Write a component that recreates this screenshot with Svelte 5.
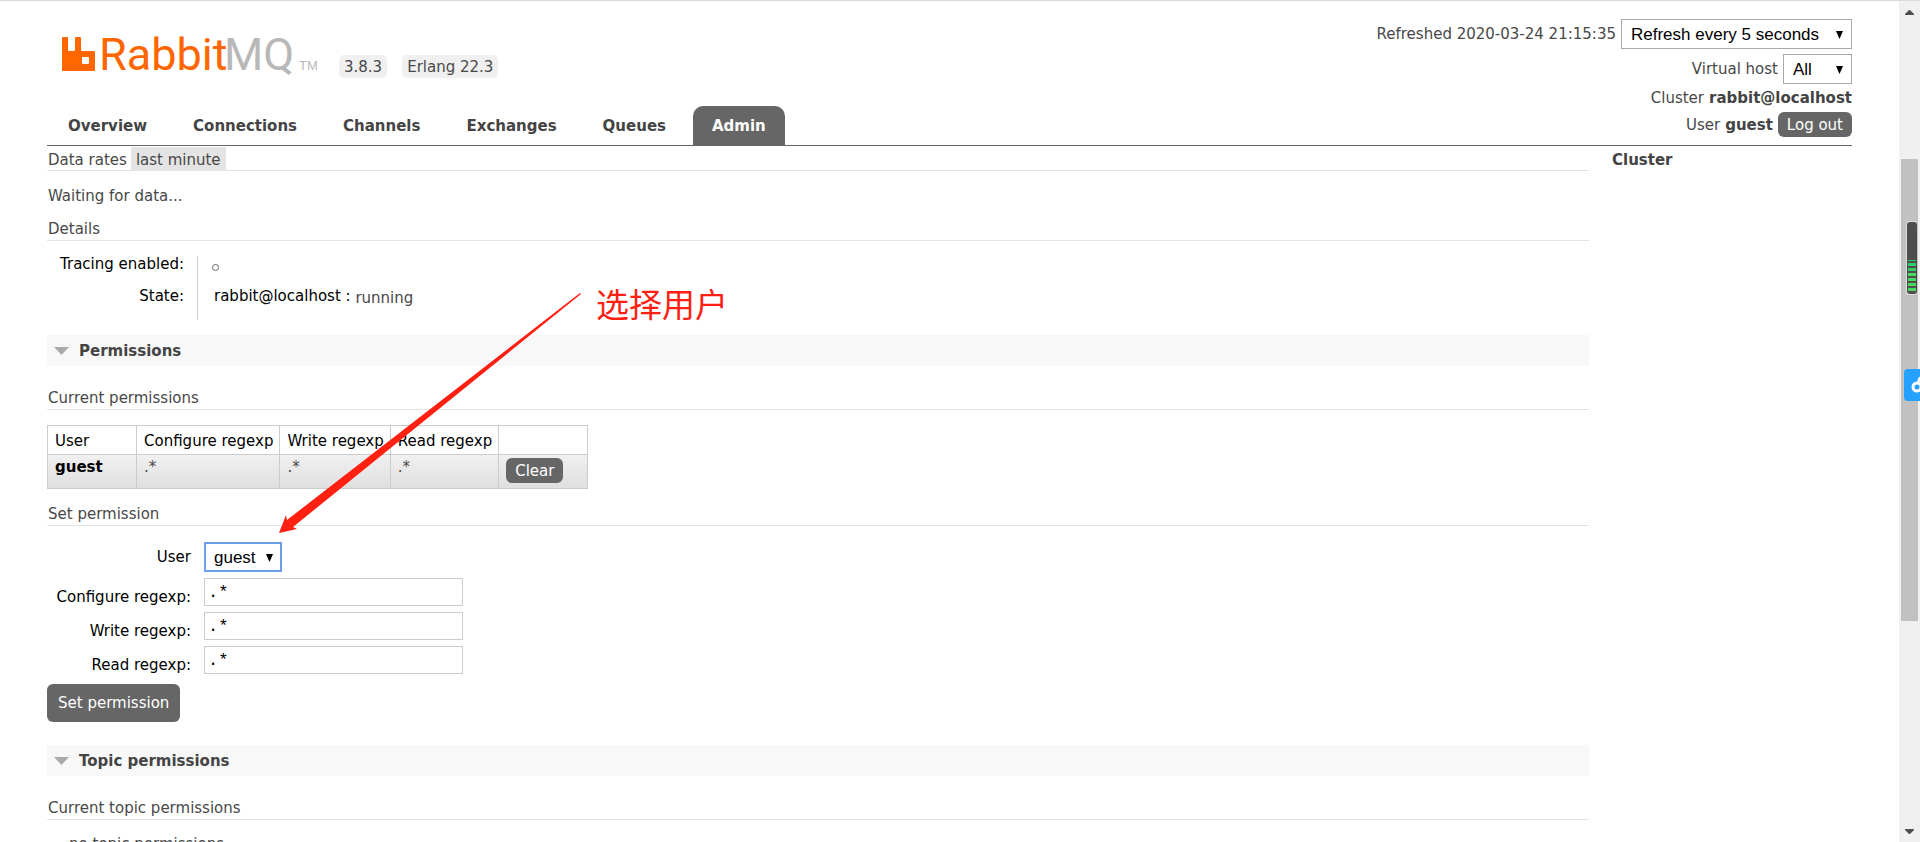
<script lang="ts">
	const tabs = ['Overview', 'Connections', 'Channels', 'Exchanges', 'Queues', 'Admin'];
	const columns = ['User', 'Configure regexp', 'Write regexp', 'Read regexp', ''];
	const permissions = [{ user: 'guest', configure: '.*', write: '.*', read: '.*' }];
	const ticks = [0, 3, 5, 8, 10, 13, 15, 18, 20, 23, 25, 28, 30];

	let activeTab = 'Admin';
	let fields = [
		{ id: 'configure', label: 'Configure regexp:', value: '.*' },
		{ id: 'write', label: 'Write regexp:', value: '.*' },
		{ id: 'read', label: 'Read regexp:', value: '.*' }
	];
</script>

<svelte:head>
	<title>RabbitMQ Management</title>
</svelte:head>

<div class="window">
	<div class="page">
		<header>
			<div class="brand-side">
				<div class="brand">
					<svg class="logo" width="262" height="52" viewBox="0 1 262 52" role="img" aria-label="RabbitMQ">
						<path
							fill="#f60"
							fill-rule="evenodd"
							d="M1 12h4q1 0 1 1v12q0 1 1 1h5q1 0 1-1V13q0-1 1-1h4q1 0 1 1v12q0 1 1 1h12q1 0 1 1v18q0 1-1 1H1q-1 0-1-1V13q0-1 1-1zM21 32q-1 0-1 1v5q0 1 1 1h5q1 0 1-1v-5q0-1-1-1z"
						/>
						<text class="rabbit" x="37" y="45">Rabbit</text>
						<text class="mq" x="162" y="45">MQ</text>
						<text class="tm" x="237" y="45">TM</text>
					</svg>
					<span class="version">3.8.3</span>
					<span class="version">Erlang 22.3</span>
				</div>
				<nav>
					{#each tabs as tab}
						<a href="#/{tab.toLowerCase()}" class:selected={activeTab === tab} on:click={() => (activeTab = tab)}>{tab}</a>
					{/each}
				</nav>
			</div>

			<div class="login">
				<div class="login-row">
					<label for="refresh">Refreshed 2020-03-24 21:15:35</label>
					<span class="select">
						<select id="refresh" class="refresh">
							<option>Refresh every 5 seconds</option>
							<option>Refresh every 30 seconds</option>
							<option>Do not refresh</option>
						</select>
						<svg width="7" height="8" viewBox="0 0 7 8"><path d="M0 0h7L3.5 8z" /></svg>
					</span>
				</div>
				<div class="login-row">
					<label for="vhost">Virtual host</label>
					<span class="select">
						<select id="vhost" class="vhost">
							<option>All</option>
							<option>/</option>
						</select>
						<svg width="7" height="8" viewBox="0 0 7 8"><path d="M0 0h7L3.5 8z" /></svg>
					</span>
				</div>
				<div class="login-row">Cluster <b>rabbit@localhost</b></div>
				<div class="login-row">
					User <b>guest</b>
					<button class="small">Log out</button>
				</div>
			</div>
		</header>

		<div class="body">
			<main>
				<div class="rates">
					<span>Data rates</span>
					<button class="rate">last minute</button>
				</div>
				<p class="waiting">Waiting for data...</p>

				<h3 class="details">Details</h3>
				<table class="facts">
					<tbody>
						<tr>
							<th>Tracing enabled:</th>
							<td><span class="circle"></span></td>
						</tr>
						<tr>
							<th>State:</th>
							<td><span class="node">rabbit@localhost :</span> <span class="state">running</span></td>
						</tr>
					</tbody>
				</table>

				<h2>
					<svg width="15" height="8" viewBox="0 0 15 8"><path fill="#aaa" d="M0 0h15L7.5 8z" /></svg>
					Permissions
				</h2>
				<h3>Current permissions</h3>
				<table class="list">
					<thead>
						<tr>
							{#each columns as column}
								<th>{column}</th>
							{/each}
						</tr>
					</thead>
					<tbody>
						{#each permissions as row}
							<tr>
								<td><a href="#/users/{row.user}">{row.user}</a></td>
								<td>{row.configure}</td>
								<td>{row.write}</td>
								<td>{row.read}</td>
								<td><button class="small clear">Clear</button></td>
							</tr>
						{/each}
					</tbody>
				</table>

				<h3 class="set">Set permission</h3>
				<form on:submit|preventDefault>
					<div class="form-row user-row">
						<label for="user">User</label>
						<span class="select">
							<select id="user" class="user">
								<option>guest</option>
							</select>
							<svg width="7" height="8" viewBox="0 0 7 8"><path d="M0 0h7L3.5 8z" /></svg>
						</span>
					</div>
					{#each fields as field}
						<div class="form-row">
							<label for={field.id}>{field.label}</label>
							<input id={field.id} type="text" bind:value={field.value} />
						</div>
					{/each}
					<button class="submit">Set permission</button>
				</form>

				<h2 class="topic">
					<svg width="15" height="8" viewBox="0 0 15 8"><path fill="#aaa" d="M0 0h15L7.5 8z" /></svg>
					Topic permissions
				</h2>
				<h3>Current topic permissions</h3>
				<p class="empty">... no topic permissions ...</p>
			</main>

			<aside>
				<h4>Cluster</h4>
			</aside>
		</div>

		<svg class="arrow" width="302" height="240" viewBox="0 0 302 240">
			<path fill="#ff2012" d="M301 0L302 1L14 234L18 236L0 240L7 222L8 227Z" />
		</svg>
		<span class="note">选择用户</span>
	</div>

	<div class="scrollbar">
		<svg width="9" height="5" viewBox="0 0 9 5"><path fill="#505050" d="M4 0h1l4 4v1H0V4z" /></svg>
		<div class="track"><div class="thumb"></div></div>
		<svg width="9" height="5" viewBox="0 0 9 5"><path fill="#505050" d="M0 0h9v1L5 5H4L0 1z" /></svg>

		<svg class="meter" width="11" height="74" viewBox="0 0 11 74">
			<rect width="11" height="74" rx="3" fill="#ddd" />
			<rect x="1" y="1" width="10" height="72" rx="3" fill="#4d4d4d" />
			{#each ticks as tick}
				<rect x="2" y={39 + tick} width="8" height={tick % 5 ? 2 : 1} fill={tick > 12 ? '#48d960' : '#2bd067'} />
			{/each}
		</svg>
		<svg class="share" width="16" height="32" viewBox="0 0 16 32">
			<rect width="24" height="32" rx="4" fill="#26a1ff" />
			<circle cx="13" cy="18" r="4" fill="none" stroke="#fff" stroke-width="3" />
			<path d="M15 13q0-4 3-5" fill="none" stroke="#fff" stroke-width="3" />
		</svg>
	</div>
</div>

<style>
	:global(body) {
		background: #fff;
	}

	.window {
		display: flex;
		height: 100vh;
		box-sizing: border-box;
		overflow: hidden;
		border-top: 1px solid #d9d9de;
		font: 15px/18px Verdana, 'DejaVu Sans', sans-serif;
		color: #484848;
	}

	.page {
		position: relative;
		flex: 1;
		min-width: 0;
		padding: 0 47px;
	}

	header {
		display: flex;
		justify-content: space-between;
		border-bottom: 1px solid #666;
	}

	.brand-side {
		display: flex;
		flex-direction: column;
		justify-content: space-between;
	}

	.brand {
		display: flex;
		align-items: flex-end;
		gap: 15px;
		padding: 25px 0 0 15px;
	}

	.logo {
		display: block;
		overflow: visible;
	}

	.logo text {
		font-family: Roboto, 'Liberation Sans', sans-serif;
		font-size: 45px;
	}

	.logo .rabbit {
		fill: #f60;
	}

	.logo .mq {
		fill: #b8b8b8;
	}

	.logo .tm {
		fill: #b8b8b8;
		font-family: 'Liberation Sans', sans-serif;
		font-size: 13px;
	}

	.version {
		padding: 3px 5px 2px;
		border-radius: 5px;
		background: #f0f0f0;
	}

	nav {
		display: flex;
		gap: 8px;
		padding-left: 2px;
	}

	nav a {
		padding: 11px 19px 10px;
		border-radius: 10px 10px 0 0;
		font-weight: bold;
		color: #444;
		text-decoration: none;
	}

	nav a.selected {
		background: #666;
		color: #fff;
	}

	.login {
		display: flex;
		flex-direction: column;
		gap: 5px;
		padding: 18px 0 8px;
	}

	.login-row {
		display: flex;
		align-items: center;
		justify-content: flex-end;
		gap: 5px;
	}

	b,
	h4 {
		color: #444;
	}

	.select {
		position: relative;
		display: inline-flex;
	}

	.select svg {
		position: absolute;
		right: 9px;
		top: 12px;
		pointer-events: none;
	}

	select {
		appearance: none;
		height: 30px;
		padding: 0 9px;
		border: 1px solid #a9a9a9;
		border-radius: 0;
		background: #fff;
		color: #000;
		font: 17px 'Liberation Sans', Arial, sans-serif;
	}

	.refresh {
		width: 231px;
	}

	.vhost {
		width: 69px;
	}

	.user {
		width: 78px;
		border: 2px solid #6d9de8;
		padding: 0 8px;
	}

	button {
		border: 0;
		background: #666;
		color: #fff;
		font: inherit;
	}

	.small {
		padding: 4px 9px 3px;
		border-radius: 6px;
	}

	.body {
		display: flex;
		gap: 23px;
	}

	main {
		flex: 1;
		min-width: 0;
	}

	aside {
		width: 240px;
	}

	h4 {
		margin: 5px 0;
		font-size: 15px;
	}

	.rates {
		display: flex;
		gap: 4px;
		margin-top: 1px;
		border-bottom: 1px solid #e4e4e4;
	}

	.rates span {
		padding: 4px 0 1px 1px;
	}

	.rate {
		padding: 4px 5px 1px;
		background: #e4e4e4;
		color: #484848;
	}

	.waiting {
		margin: 16px 1px 15px;
	}

	h3 {
		margin: 23px 0 15px;
		padding: 0 0 2px 1px;
		border-bottom: 1px solid #e4e4e4;
		font-size: 15px;
		font-weight: normal;
	}

	h3.details {
		margin-top: 15px;
	}

	h3.set {
		margin: 16px 0;
	}

	.facts {
		border-collapse: collapse;
		line-height: 16px;
	}

	.facts th {
		width: 137px;
		height: 32px;
		padding: 0 13px 0 0;
		border-right: 1px solid #ccc;
		color: #000;
		font-weight: normal;
		text-align: right;
		vertical-align: top;
	}

	.facts td {
		padding: 0 0 0 16px;
		vertical-align: top;
	}

	.circle {
		display: block;
		width: 5px;
		height: 5px;
		margin: 8px 0 0 -2px;
		border: 1px solid #666;
		border-radius: 50%;
	}

	.node {
		color: #000;
	}

	.state {
		display: inline-block;
		padding-top: 2px;
		vertical-align: top;
	}

	h2 {
		display: flex;
		align-items: center;
		gap: 10px;
		height: 31px;
		margin: 15px 0 0;
		padding-left: 7px;
		background: #f8f8f8;
		font-size: 15px;
		color: #444;
	}

	h2.topic {
		margin-top: 23px;
	}

	.list {
		border-collapse: collapse;
	}

	.list th,
	.list td {
		box-sizing: border-box;
		min-width: 89px;
		padding: 6px 6px 4px 7px;
		border: 1px solid #ccc;
		text-align: left;
		vertical-align: top;
	}

	.list th {
		color: #000;
		font-weight: normal;
	}

	.list td {
		padding: 3px 6px 5px 7px;
	}

	.list tbody tr {
		background: linear-gradient(#f0f0f0, #dfdfdf);
	}

	.list a {
		color: #000;
		font-weight: bold;
		text-decoration: none;
	}

	.clear {
		display: block;
	}

	.form-row {
		display: flex;
		align-items: flex-end;
		gap: 13px;
		margin-bottom: 6px;
	}

	.form-row label {
		width: 144px;
		color: #000;
		text-align: right;
	}

	.user-row {
		align-items: center;
	}

	input {
		box-sizing: border-box;
		width: 259px;
		height: 28px;
		padding: 0 3px;
		border: 1px solid #ccc;
		color: #000;
		font: 17px 'Liberation Mono', monospace;
	}

	.submit {
		margin-top: 4px;
		padding: 10px 11px;
		border-radius: 6px;
	}

	.empty {
		margin: 0 3px;
	}

	.arrow {
		position: absolute;
		left: 279px;
		top: 292px;
	}

	.note {
		position: absolute;
		left: 596px;
		top: 282px;
		color: #ff2012;
		font: 33px/40px 'Noto Sans CJK SC', sans-serif;
	}

	.scrollbar {
		position: relative;
		display: flex;
		flex-direction: column;
		align-items: center;
		justify-content: space-between;
		width: 21px;
		padding: 9px 0 8px;
		box-sizing: border-box;
		background: #f0f0f0;
	}

	.track {
		flex: 1;
		padding-top: 144px;
	}

	.thumb {
		width: 17px;
		height: 462px;
		background: #c1c1c1;
	}

	.meter {
		position: absolute;
		right: 3px;
		top: 220px;
	}

	.share {
		position: absolute;
		right: 0;
		top: 368px;
	}
</style>
